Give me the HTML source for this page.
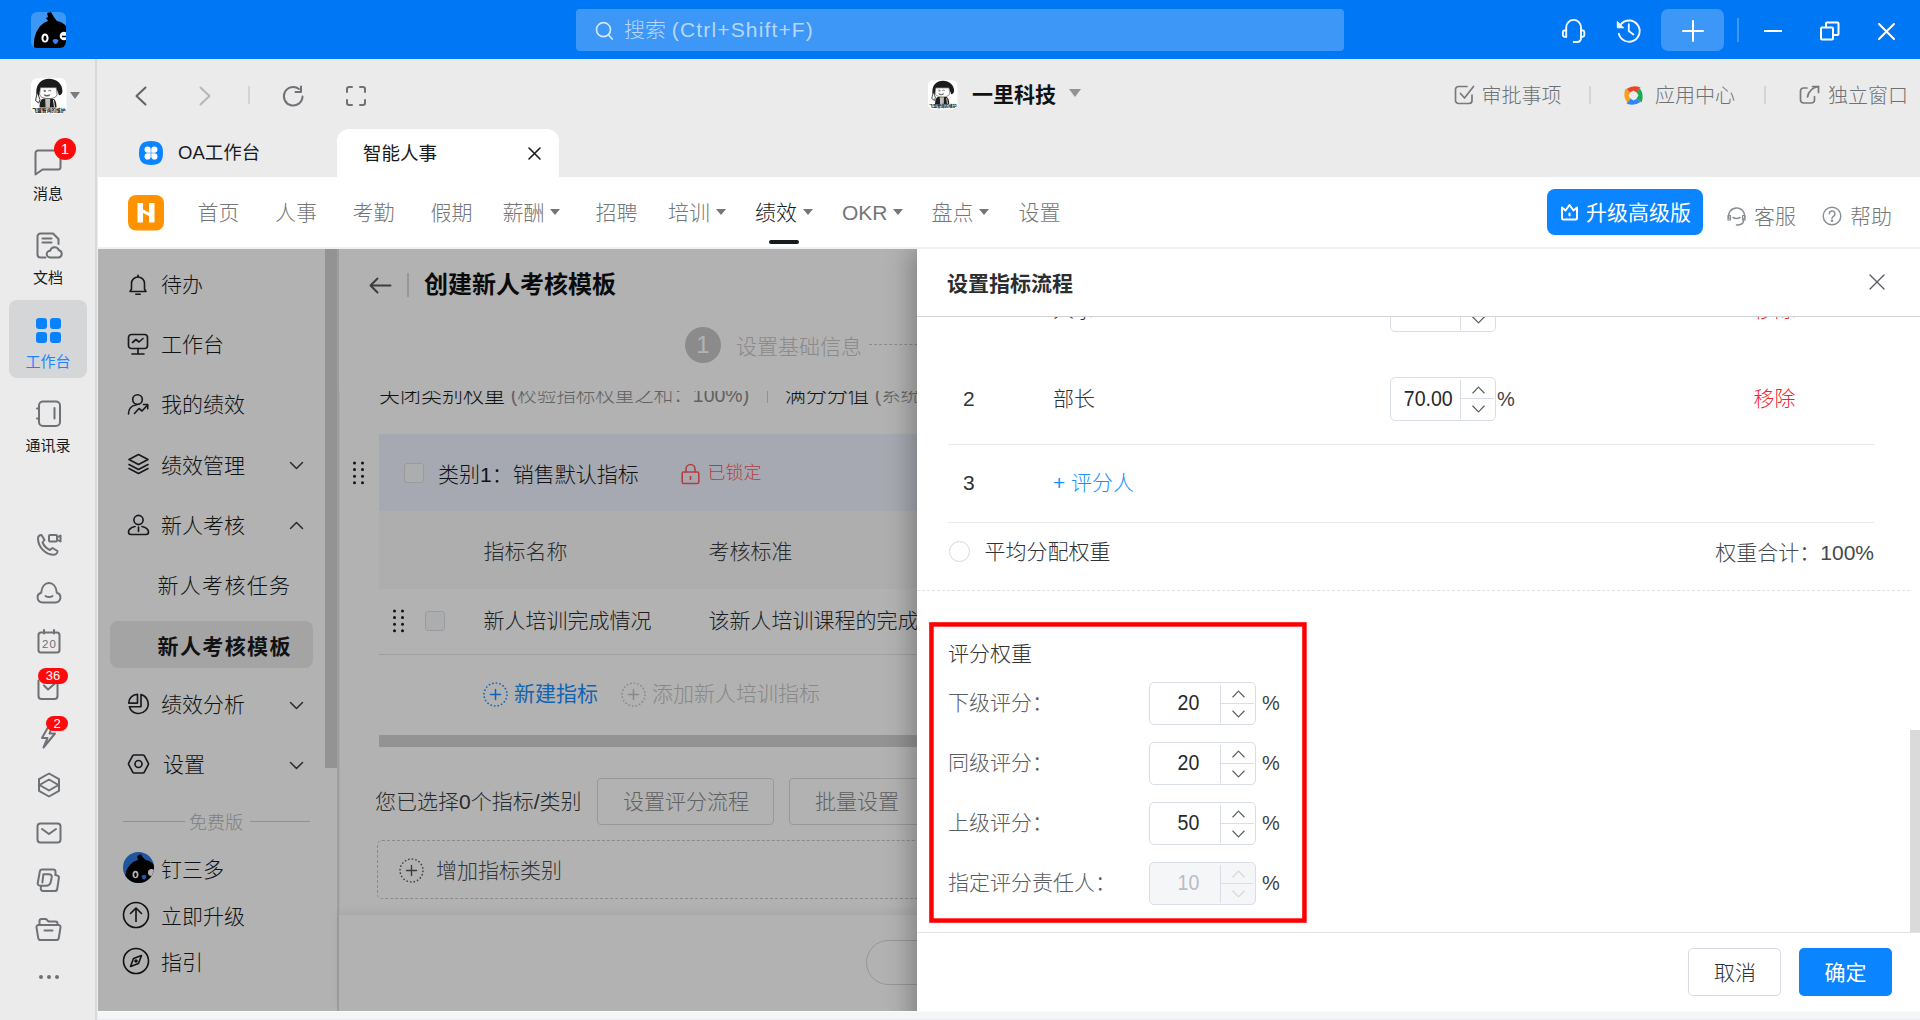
<!DOCTYPE html>
<html lang="zh-CN">
<head>
<meta charset="utf-8">
<title>智能人事</title>
<style>
*{box-sizing:border-box;margin:0;padding:0}
html,body{width:1920px;height:1020px;overflow:hidden;background:#ebebeb}
body{font-family:"Liberation Sans","Noto Sans CJK SC",sans-serif;font-weight:300;color:#171a1d;position:relative}
.abs{position:absolute}
.t{position:absolute;white-space:nowrap;line-height:1}
svg{position:absolute;overflow:visible}
/* top bar */
#topbar{position:absolute;left:0;top:0;width:1920px;height:59px;background:#0077f5}
#search{position:absolute;left:576px;top:9px;width:768px;height:42px;border-radius:4px;background:#3d97f7}
#plusbtn{position:absolute;left:1661px;top:9px;width:63px;height:42px;border-radius:7px;background:#3d97f7}
/* left rail */
#rail{position:absolute;left:0;top:59px;width:97px;height:961px;background:#ebebeb;border-right:2px solid #d9dadb}
/* header */
#hdr{position:absolute;left:98px;top:59px;width:1822px;height:118px;background:#ebebeb}
#tab2{position:absolute;left:337px;top:129px;width:222px;height:48px;background:#fff;border-radius:12px 12px 0 0}
#appnav{position:absolute;left:98px;top:177px;width:1822px;height:72px;background:#fff;border-bottom:2px solid #eef0f3}
.nav{position:absolute;top:201px;font-size:21px;color:#747677;line-height:24px;white-space:nowrap}
.caret{display:inline-block;width:0;height:0;border-left:5.5px solid transparent;border-right:5.5px solid transparent;border-top:6px solid #747677;vertical-align:middle;margin-left:5.500px;position:relative;top:-2px}
/* page (dimmed) */
#page{position:absolute;left:98px;top:249px;width:1822px;height:762px;background:#fff;overflow:hidden}
#mask{position:absolute;left:98px;top:249px;width:1822px;height:761.700px;background:rgba(0,0,0,.3)}
#dclip{position:absolute;left:98px;top:249px;width:1822px;height:762px;overflow:hidden}
#dshadow{position:absolute;left:819px;top:0;width:1003px;height:850px;box-shadow:-6px 0 24px rgba(0,0,0,.28)}
#drawer{position:absolute;left:819px;top:0;width:1003px;height:762px;background:#fff;overflow:hidden}
#bottom{position:absolute;left:98px;top:1011px;width:1822px;height:9px;background:linear-gradient(#fbfbfc 0,#fbfbfc 1px,#f4f5f7 1.500px,#f4f5f7 7px,#e9eaed 9px)}
.sb{position:absolute;left:63px;font-size:21px;line-height:24px;color:#171a1d;white-space:nowrap}
</style>
</head>
<body>
<div id="topbar">
  <!-- logo -->
  <svg style="left:31px;top:12px" width="35" height="36" viewBox="0 0 35 36">
    <defs><clipPath id="lc"><rect x="0" y="0" width="35" height="36" rx="6"/></clipPath></defs>
    <rect width="35" height="36" rx="6" fill="#3d97f7"/>
    <g clip-path="url(#lc)">
      <path d="M3 36 C2 22 8 12 17 9 L15 6 L17 5 L16 1 L20 0 C22 4 24 7 26 9 C31 10 35 13 37 17 L37 36 Z" fill="#000"/>
      <ellipse cx="14" cy="26" rx="3.6" ry="4.6" fill="#fff"/><ellipse cx="14" cy="26.3" rx="1.5" ry="2.7" fill="#000"/>
      <circle cx="33" cy="24" r="4.3" fill="#fff"/><path d="M31 24.5h6" stroke="#000" stroke-width="1.6"/>
      <path d="M21.5 28 q3 -2.2 6 0 q-1 4 -3 4 q-2 0 -3 -4z" fill="#3a82f0"/>
    </g>
  </svg>
  <div id="search"></div>
  <svg style="left:595px;top:21px" width="19" height="20" viewBox="0 0 19 20" fill="none" stroke="#d4e7fd" stroke-width="1.700" stroke-linecap="round"><circle cx="8.5" cy="8.7" r="7"/><path d="M13.6 14l3.6 4"/></svg>
  <div class="t" style="left:624px;top:17.500px;font-size:21px;color:#b7d6fc;line-height:24px">搜索 <span style="letter-spacing:1.150px">(Ctrl+Shift+F)</span></div>
  <!-- headset -->
  <svg style="left:1561px;top:18px" width="26" height="26" viewBox="0 0 26 26" fill="none" stroke="#f2f7ff" stroke-width="1.900" stroke-linecap="round" stroke-linejoin="round"><path d="M5.200 18.700V9.300a7.400 7.400 0 0 1 14.800 0V20c0 2.700-1.800 4-4 4h-3.300"/><path d="M5.200 12.500H3.400a1.500 1.500 0 0 0-1.500 1.500v3.200a1.500 1.500 0 0 0 1.500 1.500h1.800M20 12.500h1.800a1.500 1.500 0 0 1 1.500 1.500v3.200a1.500 1.500 0 0 1-1.500 1.500H20"/></svg>
  <!-- history -->
  <svg style="left:1615px;top:18px" width="27" height="26" viewBox="0 0 27 26" fill="none" stroke="#f2f7ff" stroke-width="1.900" stroke-linecap="round" stroke-linejoin="round"><path d="M6 6.200A10.600 10.600 0 1 1 3.800 15.800"/><path d="M2.300 3.800v6h6z" fill="#f2f7ff" stroke-width="1"/><path d="M13.800 6.300v6.600l4.600 3.500"/></svg>
  <div id="plusbtn"></div>
  <svg style="left:1682px;top:20px" width="22" height="22" viewBox="0 0 22 22" stroke="#fff" stroke-width="2" stroke-linecap="round"><path d="M11 1v20M1 11h20"/></svg>
  <div class="abs" style="left:1737px;top:18px;width:2px;height:24px;background:#3d97f7"></div>
  <div class="abs" style="left:1764px;top:30px;width:18px;height:2px;background:#fff"></div>
  <svg style="left:1820px;top:21px" width="20" height="20" viewBox="0 0 20 20" fill="none" stroke="#fff" stroke-width="2" stroke-linejoin="round"><rect x="1" y="6.500" width="12" height="12" rx="1"/><path d="M6 6.500V2.500a1 1 0 0 1 1-1h10.500a1 1 0 0 1 1 1V13a1 1 0 0 1-1 1H13"/></svg>
  <svg style="left:1878px;top:23px" width="17" height="17" viewBox="0 0 17 17" stroke="#fff" stroke-width="2" stroke-linecap="round"><path d="M1 1l15 15M16 1L1 16"/></svg>
</div>
<div id="rail"></div>
<!-- rail content (absolute in body coords) -->
<div id="railc">
  <!-- avatar -->
  <svg style="left:30.500px;top:78px" width="35.500" height="36" viewBox="0 0 35.500 36">
    <rect width="35.500" height="36" rx="6.500" fill="#fff"/>
    <path d="M5.300 14.500C5 6 10.500 .800 18 .800S31.800 6 31.400 13.500c-.200 2.500-1.600 3.800-3.400 3.800l-2.800-7.500H9.500l-1.500 7.500c-1.800 0-2.700-1-2.700-2.800z" fill="#1c1c1c"/>
    <path d="M9.300 9.600h16l.8 6.400c0 3-3.500 4.600-8.500 4.600s-9-1.600-9-4.600z" fill="#fbfbfb" stroke="#2a2a2a" stroke-width=".600"/>
    <path d="M12.600 12.200l2.200.5M12.800 13.400h2M17.200 12.900q1.500-1 3 0" stroke="#333" stroke-width=".700" fill="none"/>
    <path d="M12.800 16.700q3.200 1.900 6.400 0M13.500 17.600q2.500 1 5 0" stroke="#333" stroke-width=".700" fill="none"/>
    <path d="M8.500 29.600c0-6 1.500-8.800 4-8.800h9c2.500 0 4 2.800 4 8.800z" fill="#1e1e1e"/>
    <path d="M14.200 21h5l-.3 8.600h-4.400z" fill="#bdbdbd"/>
    <path d="M22.500 22l1 7.600" stroke="#e8e8e8" stroke-width="1"/>
    <path d="M6.300 14.500l-1.800 8 3.300 2.500 1.200-3.500z" fill="#f4f4f4" stroke="#222" stroke-width=".900" stroke-linejoin="round"/>
    <text x="17.900" y="34.300" font-size="4.900" font-weight="bold" text-anchor="middle" fill="#111" textLength="33.500" lengthAdjust="spacingAndGlyphs" font-family="Liberation Sans,Noto Sans CJK SC,sans-serif">飞盟智询的维护</text>
  </svg>
  <div class="abs" style="left:70px;top:92px;width:0;height:0;border-left:5px solid transparent;border-right:5px solid transparent;border-top:7px solid #7a7c7f"></div>
  <!-- message -->
  <svg style="left:34px;top:149px" width="28" height="27" viewBox="0 0 28 27" fill="none" stroke="#6e7175" stroke-width="2" stroke-linejoin="round"><path d="M4 1.500h20a2.500 2.500 0 0 1 2.500 2.500v14a2.500 2.500 0 0 1-2.500 2.500H8.500L1.500 25.500V4a2.500 2.500 0 0 1 2.500-2.500z"/></svg>
  <div class="abs" style="left:54px;top:138px;width:22px;height:22px;border-radius:11px;background:#ff0a0a;color:#fff;font-size:15px;line-height:22px;text-align:center">1</div>
  <div class="t" style="left:33px;top:185.7px;font-size:15px;line-height:16px;font-weight:400;color:#171a1d">消息</div>
  <!-- doc -->
  <svg style="left:36px;top:232px" width="26" height="28" viewBox="0 0 26 28" fill="none" stroke="#6e7175" stroke-width="2" stroke-linecap="round" stroke-linejoin="round"><path d="M9.500 25.500H4.500a3 3 0 0 1-3-3V4.500a3 3 0 0 1 3-3H17l5.500 5.500v5"/><path d="M6.500 6.500h9M6.500 10.500h9"/><path d="M14 25.500a3.400 3.400 0 0 1 .200-6.800 4.500 4.500 0 0 1 8.600-.500 3.700 3.700 0 0 1-.500 7.300z"/></svg>
  <div class="t" style="left:33px;top:269.7px;font-size:15px;line-height:16px;font-weight:400;color:#171a1d">文档</div>
  <!-- workbench selected -->
  <div class="abs" style="left:9px;top:300px;width:78px;height:78px;border-radius:8px;background:#d5d6d8"></div>
  <div class="abs" style="left:36px;top:318px;width:11px;height:11px;border-radius:3px;background:#0a82ff"></div>
  <div class="abs" style="left:50px;top:318px;width:11px;height:11px;border-radius:3px;background:#0a82ff"></div>
  <div class="abs" style="left:36px;top:332px;width:11px;height:11px;border-radius:3px;background:#0a82ff"></div>
  <div class="abs" style="left:50px;top:332px;width:11px;height:11px;border-radius:3px;background:#0a82ff"></div>
  <div class="t" style="left:25.500px;top:353.7px;font-size:15px;line-height:16px;font-weight:400;color:#1a86ff">工作台</div>
  <!-- contacts -->
  <svg style="left:35px;top:400px" width="27" height="28" viewBox="0 0 27 28" fill="none" stroke="#6e7175" stroke-width="2" stroke-linecap="round" stroke-linejoin="round"><rect x="4" y="1.500" width="21" height="24.500" rx="4"/><path d="M2 8.500h2M2 18.500h2M19.500 8v10.500"/></svg>
  <div class="t" style="left:25.500px;top:437.7px;font-size:15px;line-height:16px;font-weight:400;color:#171a1d">通讯录</div>
  <!-- phone -->
  <svg style="left:36px;top:533px" width="26" height="24" viewBox="0 0 26 24" fill="none" stroke="#6e7175" stroke-width="2" stroke-linecap="round" stroke-linejoin="round"><path d="M2 5.500c0-2 1.500-3.500 3.500-3.500L8.500 7 6.500 9.500c1.500 3.500 4 6 7.500 7.500L16.500 15l5 3c0 2-1.500 3.800-3.500 3.800C9.500 21.800 2 14 2 5.500z"/><rect x="13" y="2" width="8" height="6.500" rx="1"/><path d="M21 4.500l3.500-2v6l-3.500-2z"/></svg>
  <!-- cloud -->
  <svg style="left:36px;top:581px" width="26" height="23" viewBox="0 0 26 23" fill="none" stroke="#6e7175" stroke-width="2" stroke-linecap="round" stroke-linejoin="round"><path d="M6.500 21.500a5 5 0 0 1-1.300-9.800C5.700 5.500 9 2 13 2s7.300 3.500 7.800 9.700A5 5 0 0 1 19.500 21.500z"/><path d="M9.500 15q3.500 2.200 7 0"/></svg>
  <!-- calendar -->
  <svg style="left:37px;top:629px" width="24" height="25" viewBox="0 0 24 25" fill="none" stroke="#6e7175" stroke-width="2" stroke-linecap="round" stroke-linejoin="round"><rect x="1.500" y="3.500" width="21" height="20" rx="2.500"/><path d="M7 1v3.500M17 1v3.500"/><text x="12" y="18.500" font-size="11.500" font-family="Liberation Sans,sans-serif" text-anchor="middle" fill="#6e7175" stroke="none" textLength="14">20</text></svg>
  <!-- todo -->
  <svg style="left:37px;top:679px" width="23" height="22" viewBox="0 0 23 22" fill="none" stroke="#6e7175" stroke-width="2" stroke-linecap="round" stroke-linejoin="round"><path d="M1.500 1.500v15.500a3 3 0 0 0 3 3h13a3 3 0 0 0 3-3V1.500"/><path d="M7 6.500l4 4 7-6"/></svg>
  <div class="abs" style="left:38px;top:668px;width:30px;height:16px;border-radius:8px;background:#ff0a0a;color:#fff;font-size:13px;line-height:16px;text-align:center">36</div>
  <!-- lightning -->
  <svg style="left:40px;top:724px" width="18" height="25" viewBox="0 0 18 25" fill="none" stroke="#6e7175" stroke-width="2" stroke-linejoin="round"><path d="M9 1.500L2 14h5.500L3.500 23.500 15 9.500H9.500L12.500 1.500z"/></svg>
  <div class="abs" style="left:46px;top:716px;width:22px;height:15px;border-radius:8px;background:#ff0a0a;color:#fff;font-size:13px;line-height:15px;text-align:center">2</div>
  <!-- hex layers -->
  <svg style="left:37px;top:772px" width="24" height="26" viewBox="0 0 24 26" fill="none" stroke="#6e7175" stroke-width="2" stroke-linejoin="round"><path d="M12 1.500l10 5.700v11.600L12 24.500 2 18.800V7.200z"/><path d="M2.500 13L12 7.500 21.500 13 12 18.500z"/></svg>
  <!-- mail -->
  <svg style="left:36px;top:822px" width="26" height="22" viewBox="0 0 26 22" fill="none" stroke="#6e7175" stroke-width="2" stroke-linecap="round" stroke-linejoin="round"><rect x="1.500" y="1.500" width="23" height="19" rx="3"/><path d="M6 7l7 5 7-5"/></svg>
  <!-- D -->
  <svg style="left:36px;top:868px" width="25" height="25" viewBox="0 0 25 25" fill="none" stroke="#6e7175" stroke-width="2" stroke-linecap="round" stroke-linejoin="round"><path d="M19.500 7V4a2.400 2.400 0 0 0-2.400-2.400H6.200a2.400 2.400 0 0 0-2.400 2.100L1.700 15.200a2.200 2.200 0 0 0 2.200 2.500H10c2.600 0 4.300-1.600 4.800-4l.9-4.200c.5-2.200-.9-3.300-3-3.300H7.400L6.400 14.400"/><path d="M19.500 7l2 .6a2 2 0 0 1 1.400 2.300L21.200 21a2.400 2.400 0 0 1-2.400 2H7a2.200 2.200 0 0 1-2.200-2.500l.3-2.700"/></svg>
  <!-- folder -->
  <svg style="left:35px;top:917px" width="27" height="25" viewBox="0 0 27 25" fill="none" stroke="#6e7175" stroke-width="2" stroke-linecap="round" stroke-linejoin="round"><path d="M4.500 8V4a2 2 0 0 1 2-2h4.500l2.500 2.500h7a2 2 0 0 1 2 2V8"/><path d="M3.500 8h20a2 2 0 0 1 2 2.300l-1.700 10.500a2.500 2.500 0 0 1-2.500 2.200H5.700a2.500 2.500 0 0 1-2.500-2.200L1.500 10.300A2 2 0 0 1 3.500 8z"/><path d="M9.500 13.500h8"/></svg>
  <!-- dots -->
  <div class="abs" style="left:39px;top:974.500px;width:4px;height:4px;border-radius:2px;background:#6e7175"></div>
  <div class="abs" style="left:47px;top:974.500px;width:4px;height:4px;border-radius:2px;background:#6e7175"></div>
  <div class="abs" style="left:55px;top:974.500px;width:4px;height:4px;border-radius:2px;background:#6e7175"></div>
</div>
<div id="hdr"></div>
<div id="hdrc">
  <svg style="left:134px;top:86px" width="14" height="20" viewBox="0 0 14 20" fill="none" stroke="#5f6266" stroke-width="2" stroke-linecap="round" stroke-linejoin="round"><path d="M11.500 1.500L2.500 10l9 8.500"/></svg>
  <svg style="left:198px;top:86px" width="14" height="20" viewBox="0 0 14 20" fill="none" stroke="#b4b6b9" stroke-width="2" stroke-linecap="round" stroke-linejoin="round"><path d="M2.500 1.500l9 8.500-9 8.500"/></svg>
  <div class="abs" style="left:248px;top:86px;width:2px;height:18px;background:#d3d4d6"></div>
  <svg style="left:282px;top:85px" width="23" height="22" viewBox="0 0 23 22" fill="none" stroke="#6e7175" stroke-width="2" stroke-linecap="round" stroke-linejoin="round"><path d="M20.500 11.500a9.300 9.300 0 1 1-3.500-7.500"/><path d="M19 1.500v5.500h-5.500"/></svg>
  <svg style="left:346px;top:86px" width="20" height="20" viewBox="0 0 20 20" fill="none" stroke="#6e7175" stroke-width="2" stroke-linecap="round" stroke-linejoin="round"><path d="M1 6V3a2 2 0 0 1 2-2h3M14 1h3a2 2 0 0 1 2 2v3M19 14v3a2 2 0 0 1-2 2h-3M6 19H3a2 2 0 0 1-2-2v-3"/></svg>
  <!-- company -->
  <svg style="left:928px;top:80px" width="29.500" height="29.500" viewBox="0 0 35.500 36" preserveAspectRatio="none">
    <rect width="35.500" height="36" rx="6.500" fill="#fff"/>
    <path d="M5.300 14.500C5 6 10.500 .800 18 .800S31.800 6 31.400 13.500c-.200 2.500-1.600 3.800-3.400 3.800l-2.800-7.500H9.500l-1.500 7.500c-1.800 0-2.700-1-2.700-2.800z" fill="#1c1c1c"/>
    <path d="M9.300 9.600h16l.8 6.400c0 3-3.500 4.600-8.500 4.600s-9-1.600-9-4.600z" fill="#fbfbfb" stroke="#2a2a2a" stroke-width=".600"/>
    <path d="M12.600 12.200l2.200.5M12.800 13.400h2M17.200 12.900q1.500-1 3 0" stroke="#333" stroke-width=".700" fill="none"/>
    <path d="M12.800 16.700q3.200 1.900 6.400 0M13.500 17.600q2.500 1 5 0" stroke="#333" stroke-width=".700" fill="none"/>
    <path d="M8.500 29.600c0-6 1.500-8.800 4-8.800h9c2.500 0 4 2.800 4 8.800z" fill="#1e1e1e"/>
    <path d="M14.200 21h5l-.3 8.600h-4.400z" fill="#bdbdbd"/>
    <path d="M22.500 22l1 7.600" stroke="#e8e8e8" stroke-width="1"/>
    <path d="M6.300 14.500l-1.800 8 3.300 2.500 1.200-3.500z" fill="#f4f4f4" stroke="#222" stroke-width=".900" stroke-linejoin="round"/>
    <text x="17.900" y="34.300" font-size="4.900" font-weight="bold" text-anchor="middle" fill="#111" textLength="33.500" lengthAdjust="spacingAndGlyphs" font-family="Liberation Sans,Noto Sans CJK SC,sans-serif">飞盟智询的维护</text>
  </svg>
  <div class="t" style="left:972px;top:83px;font-size:21px;line-height:24px;font-weight:bold;color:#101214">一里科技</div>
  <div class="abs" style="left:1069px;top:89px;width:0;height:0;border-left:6.500px solid transparent;border-right:6.500px solid transparent;border-top:8px solid #909397"></div>
  <!-- right -->
  <svg style="left:1454px;top:84px" width="22" height="21" viewBox="0 0 22 21" fill="none" stroke="#77797d" stroke-width="1.700" stroke-linecap="round" stroke-linejoin="round"><path d="M18 11v5.500a3 3 0 0 1-3 3H4.500a3 3 0 0 1-3-3V5.500a3 3 0 0 1 3-3H13"/><path d="M6.500 9.500l4 4.500L19.500 2.500"/></svg>
  <div class="t" style="left:1481.500px;top:83.500px;font-size:20px;line-height:24px;color:#6e7175">审批事项</div>
  <div class="abs" style="left:1589px;top:86px;width:2px;height:18px;background:#d3d4d6"></div>
  <svg style="left:1624px;top:86px" width="19" height="19" viewBox="0 0 19 19">
    <path d="M2.500 3Q9 -1.500 16.500 1.500L12.500 6.500 9.500 4.500 6 6.500z" fill="#e8472b"/>
    <path d="M16 2.500Q20.500 9 17.500 16.500L12.500 12.500 14.500 9.500 12.500 6z" fill="#1ea853"/>
    <path d="M16.500 16Q10 20.500 2.500 17.500L6.500 12.500 9.500 14.500 13 12.500z" fill="#2f86f6"/>
    <path d="M3 16.500Q-1.500 10 1.500 2.500L6.500 6.500 4.500 9.500 6.500 13z" fill="#f7a01c"/>
  </svg>
  <div class="t" style="left:1655px;top:83.500px;font-size:20px;line-height:24px;color:#6e7175">应用中心</div>
  <div class="abs" style="left:1764px;top:86px;width:2px;height:18px;background:#d3d4d6"></div>
  <svg style="left:1799px;top:85px" width="22" height="20" viewBox="0 0 22 20" fill="none" stroke="#77797d" stroke-width="1.700" stroke-linecap="round" stroke-linejoin="round"><path d="M15.500 11.500v3.500a3 3 0 0 1-3 3H4.500a3 3 0 0 1-3-3V6a3 3 0 0 1 3-3H8"/><path d="M13.500 1.500h6v6"/><path d="M19.500 1.500c-6 1-10 4.500-11 10.500"/></svg>
  <div class="t" style="left:1828px;top:83.500px;font-size:20px;line-height:24px;color:#6e7175">独立窗口</div>
  <!-- tabs -->
  <svg style="left:139px;top:141px" width="24" height="24" viewBox="0 0 24 24"><path d="M12 0C20.500 0 24 3.500 24 12S20.500 24 12 24 0 20.500 0 12 3.500 0 12 0z" fill="#0a84ff"/><path d="M8.600 5.500a3.100 3.100 0 0 1 3.100 3.100v3.100H8.600a3.100 3.100 0 0 1 0-6.200zM15.400 5.500a3.100 3.100 0 0 1 0 6.200h-3.100V8.600a3.100 3.100 0 0 1 3.100-3.100zM8.600 12.300h3.100v3.100a3.100 3.100 0 1 1-3.100-3.100zM12.300 12.300h3.100a3.100 3.100 0 1 1-3.100 3.100z" fill="#fff"/></svg>
  <div class="t" style="left:178px;top:140.500px;font-size:18.500px;line-height:24px;font-weight:400;color:#171a1d">OA工作台</div>
</div>
<div id="tab2"></div>
<div class="t" style="left:363px;top:142px;font-size:18.500px;line-height:24px;font-weight:400;color:#171a1d">智能人事</div>
<svg style="left:528px;top:147px" width="13" height="13" viewBox="0 0 13 13" stroke="#171a1d" stroke-width="1.600" stroke-linecap="round"><path d="M1 1l11 11M12 1L1 12"/></svg>
<div id="appnav"></div>
<div id="navc">
  <svg style="left:128px;top:195px" width="36" height="36" viewBox="0 0 36 36"><rect width="36" height="35.500" rx="8" fill="#ff9200"/><path d="M9.500 8h5.500v6.500l6 3V8h5.500v19.500H21V21l-6-3v9.500H9.500z" fill="#fff"/></svg>
  <div class="nav" style="left:197.500px">首页</div>
  <div class="nav" style="left:275px">人事</div>
  <div class="nav" style="left:352.500px">考勤</div>
  <div class="nav" style="left:430.500px">假期</div>
  <div class="nav" style="left:502.500px">薪酬<i class="caret"></i></div>
  <div class="nav" style="left:595.500px">招聘</div>
  <div class="nav" style="left:668px">培训<i class="caret"></i></div>
  <div class="nav" style="left:755px;color:#171a1d">绩效<i class="caret"></i></div>
  <div class="abs" style="left:769px;top:240px;width:30px;height:4px;border-radius:2px;background:#171a1d"></div>
  <div class="nav" style="left:842px">OKR<i class="caret"></i></div>
  <div class="nav" style="left:931.500px">盘点<i class="caret"></i></div>
  <div class="nav" style="left:1018.500px">设置</div>
  <div class="abs" style="left:1547px;top:189px;width:156px;height:46px;border-radius:8px;background:#0a84ff"></div>
  <svg style="left:1560px;top:203px" width="19" height="18" viewBox="0 0 19 18" fill="none" stroke="#fff" stroke-width="2" stroke-linejoin="round" stroke-linecap="round"><path d="M2 4.500l3.500 3 4-5.500 4 5.500 3.500-3V15a1.500 1.500 0 0 1-1.500 1.500h-12A1.500 1.500 0 0 1 2 15z"/><path d="M9.500 10.500v2"/></svg>
  <div class="t" style="left:1586px;top:200.500px;font-size:21px;line-height:24px;color:#fff;font-weight:400">升级高级版</div>
  <svg style="left:1726px;top:206px" width="21" height="21" viewBox="0 0 21 21" fill="none" stroke="#8a8d91" stroke-width="1.500" stroke-linecap="round" stroke-linejoin="round"><path d="M3 12.500a8 8 0 1 1 14.500 1.500"/><path d="M2 9.500h2.500v4.500H2zM16.500 9.500H19V14h-2.500z" stroke-width="1.200"/><path d="M17.500 14.500c0 3-3 4.500-7 4.500"/><path d="M7 11.500q3.500 2 7 0"/></svg>
  <div class="t" style="left:1754px;top:204.500px;font-size:21px;line-height:24px;color:#747677">客服</div>
  <svg style="left:1822px;top:206px" width="20" height="20" viewBox="0 0 20 20" fill="none" stroke="#8a8d91" stroke-width="1.400" stroke-linecap="round"><circle cx="10" cy="10" r="8.800"/><path d="M7.300 7.800a2.800 2.800 0 1 1 4 2.500c-.9.500-1.300 1-1.300 2.200"/><circle cx="10" cy="14.800" r=".6" fill="#8a8d91"/></svg>
  <div class="t" style="left:1850px;top:204.500px;font-size:21px;line-height:24px;color:#747677">帮助</div>
</div>
<div id="page"><div class="abs" style="left:-98px;top:-249px;width:1920px;height:1020px">
  <!-- sidebar -->
  <svg style="left:128px;top:274px" width="20" height="22" viewBox="0 0 20 22" fill="none" stroke="#22252a" stroke-width="1.600" stroke-linecap="round" stroke-linejoin="round"><path d="M10 1.200v1.800"/><path d="M3.500 15V9.500a6.500 6.500 0 0 1 13 0V15l1.500 2.500H2z"/><path d="M7.800 20.300h4.400"/></svg>
  <div class="t" style="left:161px;top:273px;font-size:21px;line-height:24px;">待办</div>
  <svg style="left:127px;top:333px" width="22" height="23" viewBox="0 0 22 23" fill="none" stroke="#22252a" stroke-width="1.650" stroke-linecap="round" stroke-linejoin="round"><rect x="1.500" y="1.500" width="19" height="14" rx="3"/><path d="M5.500 9.500l3.500-3 3 2.500 4-3.500"/><path d="M11 15.500v5M5 21h12"/></svg>
  <div class="t" style="left:161px;top:333px;font-size:21px;line-height:24px;">工作台</div>
  <svg style="left:127px;top:393px" width="23" height="23" viewBox="0 0 23 23" fill="none" stroke="#22252a" stroke-width="1.650" stroke-linecap="round" stroke-linejoin="round"><circle cx="10.500" cy="6.500" r="4.800"/><path d="M1.500 21c0-5 3-8.500 7.500-9"/><path d="M7.500 20.500l4.500-5 3 2.500 5.500-6"/><path d="M16.500 11.500h4.200v4.200"/></svg>
  <div class="t" style="left:161px;top:392.5px;font-size:21px;line-height:24px;">我的绩效</div>
  <svg style="left:127px;top:453px" width="23" height="22" viewBox="0 0 23 22" fill="none" stroke="#22252a" stroke-width="1.650" stroke-linecap="round" stroke-linejoin="round"><path d="M11.500 1.500l9.500 5-9.500 5-9.500-5z"/><path d="M2 11.500l9.500 5 9.500-5"/><path d="M2 15.500l9.500 5 9.500-5"/></svg>
  <div class="t" style="left:161px;top:453.8px;font-size:21px;line-height:24px;">绩效管理</div><svg style="left:288.500px;top:460.5px" width="15" height="9" viewBox="0 0 15 9" fill="none" stroke="#3a3d40" stroke-width="1.500" stroke-linecap="round" stroke-linejoin="round"><path d="M1.500 1.500l6 6 6-6"/></svg>
  <svg style="left:127px;top:514px" width="23" height="22" viewBox="0 0 23 22" fill="none" stroke="#22252a" stroke-width="1.650" stroke-linecap="round" stroke-linejoin="round"><circle cx="11.500" cy="6" r="4.600"/><path d="M8 12.500c-4 1-6.500 3-6.500 5.500 0 1.500 1 2.500 2.500 2.500h15c1.500 0 2.500-1 2.500-2.500 0-2.500-2.500-4.500-6.500-5.500"/><path d="M11.500 13v4.500"/></svg>
  <div class="t" style="left:161px;top:513.8px;font-size:21px;line-height:24px;">新人考核</div><svg style="left:288.500px;top:520.5px" width="15" height="9" viewBox="0 0 15 9" fill="none" stroke="#3a3d40" stroke-width="1.500" stroke-linecap="round" stroke-linejoin="round"><path d="M1.500 7.500l6-6 6 6"/></svg>
  <div class="t" style="left:157.5px;top:573.5px;font-size:21px;line-height:24px;letter-spacing:1.300px;">新人考核任务</div>
  <div class="abs" style="left:110px;top:621px;width:203px;height:47px;border-radius:8px;background:#ebebeb"></div>
  <div class="t" style="left:157.5px;top:634.8px;font-size:21px;line-height:24px;font-weight:bold;letter-spacing:1.400px;">新人考核模板</div>
  <svg style="left:127px;top:693px" width="23" height="22" viewBox="0 0 23 22" fill="none" stroke="#22252a" stroke-width="1.650" stroke-linecap="round" stroke-linejoin="round"><path d="M14 1.600A9.600 9.600 0 1 1 2.400 13.700H14z"/><path d="M10.500 10.100V1.400A8.800 8.800 0 0 0 1.700 10.100z"/></svg>
  <div class="t" style="left:161px;top:693px;font-size:21px;line-height:24px;">绩效分析</div><svg style="left:288.500px;top:700.5px" width="15" height="9" viewBox="0 0 15 9" fill="none" stroke="#3a3d40" stroke-width="1.500" stroke-linecap="round" stroke-linejoin="round"><path d="M1.500 1.500l6 6 6-6"/></svg>
  <svg style="left:127px;top:753px" width="23" height="23" viewBox="0 0 23 23" fill="none" stroke="#22252a" stroke-width="1.650" stroke-linecap="round" stroke-linejoin="round"><path d="M7 2h9a1.500 1.500 0 0 1 1.300.700l4 7.500a1.500 1.500 0 0 1 0 1.500l-4 7.500a1.500 1.500 0 0 1-1.300.800H7a1.500 1.500 0 0 1-1.300-.800l-4-7.500a1.500 1.500 0 0 1 0-1.500l4-7.500A1.500 1.500 0 0 1 7 2z"/><circle cx="11.500" cy="11" r="3.500"/></svg>
  <div class="t" style="left:163px;top:753px;font-size:21px;line-height:24px;">设置</div><svg style="left:288.500px;top:760.5px" width="15" height="9" viewBox="0 0 15 9" fill="none" stroke="#3a3d40" stroke-width="1.500" stroke-linecap="round" stroke-linejoin="round"><path d="M1.500 1.500l6 6 6-6"/></svg>
  <div class="abs" style="left:123px;top:821px;width:62px;height:1px;background:#d0d0d0"></div>
  <div class="abs" style="left:250px;top:821px;width:60px;height:1px;background:#d0d0d0"></div>
  <div class="t" style="left:189px;top:811.5px;font-size:18px;line-height:22px;color:#b8b8b8">免费版</div>
  <svg style="left:123px;top:852px" width="31" height="31" viewBox="0 0 31 31"><defs><clipPath id="ac"><circle cx="15.500" cy="15.500" r="15.500"/></clipPath></defs><g clip-path="url(#ac)"><rect width="31" height="31" fill="#2f7de0"/><path d="M2 31C1 18 7 10 15 8l-1-4 4-2c1 3 3 5 5 6 5 1 9 5 10 9v14z" fill="#000"/><ellipse cx="12.500" cy="22.500" rx="3" ry="3.800" fill="#fff"/><ellipse cx="12.500" cy="22.800" rx="1.200" ry="2.200" fill="#000"/><circle cx="28.500" cy="20.500" r="3.500" fill="#fff"/><path d="M18.500 24q2.500-2 5 0q-1 3.500-2.500 3.500t-2.500-3.500z" fill="#3a82f0"/></g></svg>
  <div class="t" style="left:161px;top:857.8px;font-size:21px;line-height:24px;">钉三多</div>
  <svg style="left:122px;top:901px" width="28" height="28" viewBox="0 0 28 28" fill="none" stroke="#171a1d" stroke-width="1.600" stroke-linecap="round" stroke-linejoin="round"><circle cx="14" cy="14" r="12.500"/><path d="M14 20.500v-13M8.500 12.500L14 7l5.500 5.500"/></svg>
  <div class="t" style="left:161px;top:904.8px;font-size:21px;line-height:24px;">立即升级</div>
  <svg style="left:122px;top:947px" width="28" height="28" viewBox="0 0 28 28" fill="none" stroke="#171a1d" stroke-width="1.600" stroke-linecap="round" stroke-linejoin="round"><circle cx="14" cy="14" r="12.500"/><path d="M19.500 8.500l-3 8-8 3 3-8z"/><circle cx="14" cy="14" r="1" fill="#171a1d"/></svg>
  <div class="t" style="left:161px;top:951px;font-size:21px;line-height:24px;">指引</div>
  <!-- sidebar scrollbar -->
    <div class="abs" style="left:325px;top:249px;width:12px;height:519px;background:#d3d3d3"></div>
  <div class="abs" style="left:337px;top:249px;width:1.500px;height:762px;background:#e3e3e3"></div><div class="abs" style="left:338.500px;top:249px;width:1px;height:762px;background:#f3f3f3"></div>

  <!-- main: scrolled content -->
  <div class="abs" style="left:338px;top:391px;width:1582px;height:524px;overflow:hidden"><div class="abs" style="left:-338px;top:-391px;width:1920px;height:1020px">
    <div class="t" style="left:379px;top:382.500px;font-size:21px;line-height:24px;color:#171a1d">关闭类别权重 <span style="color:#8c8c8c;font-size:19.500px">(校验指标权重之和：100%)</span></div>
    <div class="abs" style="left:767px;top:386px;width:1px;height:17px;background:#d0d0d0"></div>
    <div class="t" style="left:785px;top:382.500px;font-size:21px;line-height:24px;color:#171a1d">满分分值 <span style="color:#8c8c8c;font-size:19.500px">(系统默认)</span></div>
  </div></div>
  <div class="abs" style="left:379px;top:434px;width:1541px;height:77px;background:#eef3fe"></div>
  <svg style="left:0;top:0" width="1920" height="1020"><circle cx="354.5" cy="463.0" r="1.500" fill="#171a1d"/><circle cx="362.5" cy="463.0" r="1.500" fill="#171a1d"/><circle cx="354.5" cy="469.6" r="1.500" fill="#171a1d"/><circle cx="362.5" cy="469.6" r="1.500" fill="#171a1d"/><circle cx="354.5" cy="476.2" r="1.500" fill="#171a1d"/><circle cx="362.5" cy="476.2" r="1.500" fill="#171a1d"/><circle cx="354.5" cy="482.8" r="1.500" fill="#171a1d"/><circle cx="362.5" cy="482.8" r="1.500" fill="#171a1d"/><circle cx="394.5" cy="611.0" r="1.500" fill="#171a1d"/><circle cx="402.5" cy="611.0" r="1.500" fill="#171a1d"/><circle cx="394.5" cy="617.6" r="1.500" fill="#171a1d"/><circle cx="402.5" cy="617.6" r="1.500" fill="#171a1d"/><circle cx="394.5" cy="624.2" r="1.500" fill="#171a1d"/><circle cx="402.5" cy="624.2" r="1.500" fill="#171a1d"/><circle cx="394.5" cy="630.8" r="1.500" fill="#171a1d"/><circle cx="402.5" cy="630.8" r="1.500" fill="#171a1d"/></svg>
  <div class="abs" style="left:403.500px;top:462.500px;width:20.500px;height:20.500px;border:1px solid #dcdfe4;border-radius:3px;background:#f7f8fa"></div>
  <div class="t" style="left:438px;top:462.500px;font-size:21px;line-height:24px">类别1：销售默认指标</div>
  <svg style="left:681px;top:463px" width="19" height="22" viewBox="0 0 19 22" fill="none" stroke="#ff5b5b" stroke-width="1.600" stroke-linecap="round" stroke-linejoin="round"><rect x="1.200" y="9" width="16.600" height="11.500" rx="1.500"/><path d="M5 9V6a4.500 4.500 0 0 1 9 0v3"/><path d="M9.500 13.500v3"/></svg>
  <div class="t" style="left:707.500px;top:461px;font-size:18px;line-height:24px;color:#ff5b5b">已锁定</div>
  <div class="abs" style="left:379px;top:511px;width:1541px;height:78px;background:#fafafa"></div>
  <div class="t" style="left:483.500px;top:540px;font-size:21px;line-height:24px;color:#3a3d40">指标名称</div>
  <div class="t" style="left:708.500px;top:540px;font-size:21px;line-height:24px;color:#3a3d40">考核标准</div>
  <div class="abs" style="left:424.500px;top:610.500px;width:20.500px;height:20.500px;border:1px solid #dcdfe4;border-radius:3px;background:#f7f8fa"></div>
  <div class="t" style="left:483.500px;top:609px;font-size:21px;line-height:24px;color:#2a2d30">新人培训完成情况</div>
  <div class="t" style="left:708.500px;top:609px;font-size:21px;line-height:24px;color:#2a2d30">该新人培训课程的完成情况</div>
  <div class="abs" style="left:379px;top:654px;width:1541px;height:1px;background:#e4e4e4"></div>
  <svg style="left:483px;top:681.500px" width="25" height="25" viewBox="0 0 25 25" fill="none" stroke="#1890ff" stroke-width="1.500" stroke-linecap="round"><circle cx="12.500" cy="12.500" r="11.500" stroke-dasharray="1.600 2" stroke-linecap="butt"/><path d="M12.500 7.500v10M7.500 12.500h10"/></svg>
  <div class="t" style="left:514px;top:682px;font-size:21px;line-height:24px;font-weight:400;color:#1890ff">新建指标</div>
  <svg style="left:621px;top:681.500px" width="25" height="25" viewBox="0 0 25 25" fill="none" stroke="#c4c4c4" stroke-width="1.500" stroke-linecap="round"><circle cx="12.500" cy="12.500" r="11.500" stroke-dasharray="1.600 2" stroke-linecap="butt"/><path d="M12.500 7.500v10M7.500 12.500h10"/></svg>
  <div class="t" style="left:652px;top:682px;font-size:21px;line-height:24px;color:#c4c4c4">添加新人培训指标</div>
  <div class="abs" style="left:379px;top:735px;width:1541px;height:12px;background:#d3d3d3"></div>
  <div class="t" style="left:375px;top:790px;font-size:21px;line-height:24px;color:#3a3d40;">您已选择0个指标/类别</div>
  <div class="abs" style="left:597px;top:777.500px;width:176.500px;height:47px;border:1px solid #d9dadd;border-radius:4px"></div>
  <div class="t" style="left:623px;top:790px;font-size:21px;line-height:24px;color:#8c8c8c">设置评分流程</div>
  <div class="abs" style="left:789px;top:777.500px;width:176.500px;height:47px;border:1px solid #d9dadd;border-radius:4px"></div>
  <div class="t" style="left:815px;top:790px;font-size:21px;line-height:24px;color:#8c8c8c">批量设置</div>
  <div class="abs" style="left:377px;top:840px;width:1540px;height:59px;border:1px dashed #c8c8c8;border-radius:5px"></div>
  <svg style="left:399px;top:857.500px" width="25" height="25" viewBox="0 0 25 25" fill="none" stroke="#55585c" stroke-width="1.400" stroke-linecap="round"><circle cx="12.500" cy="12.500" r="11.500" stroke-dasharray="1.600 2" stroke-linecap="butt"/><path d="M12.500 7.500v10M7.500 12.500h10"/></svg>
  <div class="t" style="left:436px;top:859px;font-size:21px;line-height:24px;color:#4a4d50">增加指标类别</div>
  <!-- sticky header (white) -->
  <div class="abs" style="left:339px;top:249px;width:1581px;height:142px;background:#fff"></div>
  <svg style="left:369px;top:277px" width="23" height="17" viewBox="0 0 23 17" fill="none" stroke="#55585c" stroke-width="2" stroke-linecap="round" stroke-linejoin="round"><path d="M21.500 8.500H2M8.500 1.500L1.500 8.500l7 7"/></svg>
  <div class="abs" style="left:407px;top:273px;width:1.500px;height:24px;background:#d9d9d9"></div>
  <div class="t" style="left:424px;top:271px;font-size:24px;line-height:28px;font-weight:bold;color:#111">创建新人考核模板</div>
  <div class="abs" style="left:685px;top:327px;width:36px;height:36px;border-radius:18px;background:#c8c8c8;color:#fff;font-size:24px;line-height:36px;text-align:center;font-weight:400">1</div>
  <div class="t" style="left:736px;top:335px;font-size:21px;line-height:24px;color:#c6c6c6">设置基础信息</div>
  <div class="abs" style="left:869px;top:344px;width:200px;height:0;border-top:1px dashed #c8c8c8"></div>
  <!-- footer -->
  <div class="abs" style="left:339px;top:915px;width:1581px;height:97px;background:#fff;box-shadow:0 -3px 10px rgba(0,0,0,.07)"></div>
  <div class="abs" style="left:866px;top:940px;width:160px;height:45px;border:1px solid #d6d8dc;border-radius:23px"></div>

</div></div>
<div id="mask"></div>
<div id="dclip"><div id="dshadow"></div><div id="drawer"><div class="abs" style="left:-917px;top:-249px;width:1920px;height:1020px">
  <!-- body -->
  <div class="t" style="left:1053px;top:298px;font-size:21px;line-height:24px;color:#303336">人事</div>
  <div class="t" style="left:1753.500px;top:298px;font-size:21px;line-height:24px;color:#f5222d">移除</div>
  <div class="abs" style="left:1390px;top:288.5px;width:106px;height:43.5px;border:1px solid #d8dde8;border-radius:5px;background:#fff"></div><div class="abs" style="left:1460px;top:291.0px;width:1px;height:38.5px;background:#d8dde8"></div><div class="abs" style="left:1460px;top:309.75px;width:33.5px;height:1px;background:#d8dde8"></div><svg style="left:1471.75px;top:296.75px" width="13" height="8" viewBox="0 0 13 8" fill="none" stroke="#55585c" stroke-width="1.100" stroke-linecap="round" stroke-linejoin="round"><path d="M.8 7L6.500 1.200 12.200 7"/></svg><svg style="left:1471.75px;top:316.25px" width="13" height="8" viewBox="0 0 13 8" fill="none" stroke="#55585c" stroke-width="1.100" stroke-linecap="round" stroke-linejoin="round"><path d="M.8 1L6.500 6.800 12.200 1"/></svg>
  <div class="t" style="left:963px;top:387px;font-size:21px;line-height:24px;color:#303336;font-weight:400">2</div>
  <div class="t" style="left:1053px;top:387px;font-size:21px;line-height:24px;color:#303336">部长</div>
  <div class="abs" style="left:1390px;top:377px;width:106px;height:44px;border:1px solid #d8dde8;border-radius:5px;background:#fff"></div><div class="abs" style="left:1460px;top:379.5px;width:1px;height:39px;background:#d8dde8"></div><div class="abs" style="left:1460px;top:398px;width:34px;height:1px;background:#d8dde8"></div><svg style="left:1471.75px;top:385.5px" width="13" height="8" viewBox="0 0 13 8" fill="none" stroke="#55585c" stroke-width="1.100" stroke-linecap="round" stroke-linejoin="round"><path d="M.8 7L6.500 1.200 12.200 7"/></svg><svg style="left:1471.75px;top:405.0px" width="13" height="8" viewBox="0 0 13 8" fill="none" stroke="#55585c" stroke-width="1.100" stroke-linecap="round" stroke-linejoin="round"><path d="M.8 1L6.500 6.800 12.200 1"/></svg><div class="t" style="left:1392.5px;top:386.5px;width:70.5px;text-align:center;font-size:22px;transform:scaleX(.89);line-height:24px;color:#26292c;font-weight:400">70.00</div><div class="t" style="left:1497px;top:387px;font-size:20px;line-height:24px;color:#3f4246;font-weight:400">%</div>
  <div class="t" style="left:1753.500px;top:386.500px;font-size:21px;line-height:24px;color:#f5222d">移除</div>
  <div class="abs" style="left:948px;top:444px;width:926px;height:1px;background:#e9e9e9"></div>
  <div class="t" style="left:963px;top:471px;font-size:21px;line-height:24px;color:#303336;font-weight:400">3</div>
  <div class="t" style="left:1053px;top:471px;font-size:21px;line-height:24px;color:#1890ff">+ 评分人</div>
  <div class="abs" style="left:948px;top:522px;width:926px;height:1px;background:#e9e9e9"></div>
  <div class="abs" style="left:949px;top:541px;width:21px;height:21px;border:1px solid #d5d8dc;border-radius:11px;background:#fff"></div>
  <div class="t" style="left:984.500px;top:540px;font-size:21px;line-height:24px;color:#303336">平均分配权重</div>
  <div class="t" style="right:46px;top:541px;font-size:21px;line-height:24px;color:#45484c">权重合计：100%</div>
  <div class="abs" style="left:917px;top:590px;width:993px;height:0;border-top:1px dashed #e3e3e3"></div>
  <svg style="left:0;top:0" width="1920" height="1020"><rect x="931.450" y="624.450" width="373" height="296.100" fill="none" stroke="#fe0000" stroke-width="4.500"/></svg>
  <div class="t" style="left:948px;top:641.700px;font-size:21px;line-height:24px;color:#303336">评分权重</div>
  <div class="t" style="left:948px;top:691px;font-size:21px;line-height:24px;color:#5a5d61">下级评分：</div>
  <div class="abs" style="left:1149px;top:682px;width:107px;height:43px;border:1px solid #d8dde8;border-radius:5px;background:#fff"></div><div class="abs" style="left:1220px;top:684.5px;width:1px;height:38px;background:#d8dde8"></div><div class="abs" style="left:1220px;top:703.0px;width:34px;height:1px;background:#d8dde8"></div><svg style="left:1231.5px;top:690.0px" width="13" height="8" viewBox="0 0 13 8" fill="none" stroke="#55585c" stroke-width="1.100" stroke-linecap="round" stroke-linejoin="round"><path d="M.8 7L6.500 1.200 12.200 7"/></svg><svg style="left:1231.5px;top:709.5px" width="13" height="8" viewBox="0 0 13 8" fill="none" stroke="#55585c" stroke-width="1.100" stroke-linecap="round" stroke-linejoin="round"><path d="M.8 1L6.500 6.800 12.200 1"/></svg><div class="t" style="left:1152.5px;top:691.0px;width:71px;text-align:center;font-size:22px;transform:scaleX(.89);line-height:24px;color:#26292c;font-weight:400">20</div><div class="t" style="left:1262px;top:691px;font-size:20px;line-height:24px;color:#3f4246;font-weight:400">%</div>
  <div class="t" style="left:948px;top:751px;font-size:21px;line-height:24px;color:#5a5d61">同级评分：</div>
  <div class="abs" style="left:1149px;top:742px;width:107px;height:43px;border:1px solid #d8dde8;border-radius:5px;background:#fff"></div><div class="abs" style="left:1220px;top:744.5px;width:1px;height:38px;background:#d8dde8"></div><div class="abs" style="left:1220px;top:763.0px;width:34px;height:1px;background:#d8dde8"></div><svg style="left:1231.5px;top:750.0px" width="13" height="8" viewBox="0 0 13 8" fill="none" stroke="#55585c" stroke-width="1.100" stroke-linecap="round" stroke-linejoin="round"><path d="M.8 7L6.500 1.200 12.200 7"/></svg><svg style="left:1231.5px;top:769.5px" width="13" height="8" viewBox="0 0 13 8" fill="none" stroke="#55585c" stroke-width="1.100" stroke-linecap="round" stroke-linejoin="round"><path d="M.8 1L6.500 6.800 12.200 1"/></svg><div class="t" style="left:1152.5px;top:751.0px;width:71px;text-align:center;font-size:22px;transform:scaleX(.89);line-height:24px;color:#26292c;font-weight:400">20</div><div class="t" style="left:1262px;top:751px;font-size:20px;line-height:24px;color:#3f4246;font-weight:400">%</div>
  <div class="t" style="left:948px;top:811px;font-size:21px;line-height:24px;color:#5a5d61">上级评分：</div>
  <div class="abs" style="left:1149px;top:802px;width:107px;height:43px;border:1px solid #d8dde8;border-radius:5px;background:#fff"></div><div class="abs" style="left:1220px;top:804.5px;width:1px;height:38px;background:#d8dde8"></div><div class="abs" style="left:1220px;top:823.0px;width:34px;height:1px;background:#d8dde8"></div><svg style="left:1231.5px;top:810.0px" width="13" height="8" viewBox="0 0 13 8" fill="none" stroke="#55585c" stroke-width="1.100" stroke-linecap="round" stroke-linejoin="round"><path d="M.8 7L6.500 1.200 12.200 7"/></svg><svg style="left:1231.5px;top:829.5px" width="13" height="8" viewBox="0 0 13 8" fill="none" stroke="#55585c" stroke-width="1.100" stroke-linecap="round" stroke-linejoin="round"><path d="M.8 1L6.500 6.800 12.200 1"/></svg><div class="t" style="left:1152.5px;top:811.0px;width:71px;text-align:center;font-size:22px;transform:scaleX(.89);line-height:24px;color:#26292c;font-weight:400">50</div><div class="t" style="left:1262px;top:811px;font-size:20px;line-height:24px;color:#3f4246;font-weight:400">%</div>
  <div class="t" style="left:948px;top:871px;font-size:21px;line-height:24px;color:#5a5d61">指定评分责任人：</div>
  <div class="abs" style="left:1149px;top:862px;width:107px;height:43px;border:1px solid #d8dde8;border-radius:5px;background:#f5f6f8"></div><div class="abs" style="left:1220px;top:864.5px;width:1px;height:38px;background:#d8dde8"></div><div class="abs" style="left:1220px;top:883.0px;width:34px;height:1px;background:#d8dde8"></div><svg style="left:1231.5px;top:870.0px" width="13" height="8" viewBox="0 0 13 8" fill="none" stroke="#d4d6da" stroke-width="1.100" stroke-linecap="round" stroke-linejoin="round"><path d="M.8 7L6.500 1.200 12.200 7"/></svg><svg style="left:1231.5px;top:889.5px" width="13" height="8" viewBox="0 0 13 8" fill="none" stroke="#d4d6da" stroke-width="1.100" stroke-linecap="round" stroke-linejoin="round"><path d="M.8 1L6.500 6.800 12.200 1"/></svg><div class="t" style="left:1152.5px;top:871.0px;width:71px;text-align:center;font-size:22px;transform:scaleX(.89);line-height:24px;color:#b8bcc4;font-weight:400">10</div><div class="t" style="left:1262px;top:871px;font-size:20px;line-height:24px;color:#3f4246;font-weight:400">%</div>
  <!-- scrollbar -->
  <div class="abs" style="left:1910px;top:730px;width:10px;height:202px;background:#dadada"></div>
  <!-- header -->
  <div class="abs" style="left:917px;top:249px;width:1003px;height:68px;background:#fff;border-bottom:1px solid #d4d4d4"></div>
  <div class="t" style="left:947px;top:272px;font-size:21px;line-height:24px;font-weight:bold;color:#2b2d30">设置指标流程</div>
  <svg style="left:1869px;top:273.800px" width="16" height="16" viewBox="0 0 16 16" stroke="#55585c" stroke-width="1.300" stroke-linecap="round"><path d="M1 1l14 14M15 1L1 15"/></svg>
  <!-- footer -->
  <div class="abs" style="left:917px;top:932px;width:1003px;height:80px;background:#fff;border-top:1px solid #e2e2e2"></div>
  <div class="abs" style="left:1688px;top:948px;width:93px;height:47.500px;border:1px solid #d5dae6;border-radius:5px;background:#fff"></div>
  <div class="t" style="left:1714px;top:960.500px;font-size:21px;line-height:24px;color:#303336">取消</div>
  <div class="abs" style="left:1799px;top:948px;width:93px;height:47.500px;border-radius:5px;background:#0a84ff"></div>
  <div class="t" style="left:1824.500px;top:960.500px;font-size:21px;line-height:24px;color:#fff;font-weight:400">确定</div>
</div></div>
</div>
<div id="bottom"></div>
</body>
</html>
